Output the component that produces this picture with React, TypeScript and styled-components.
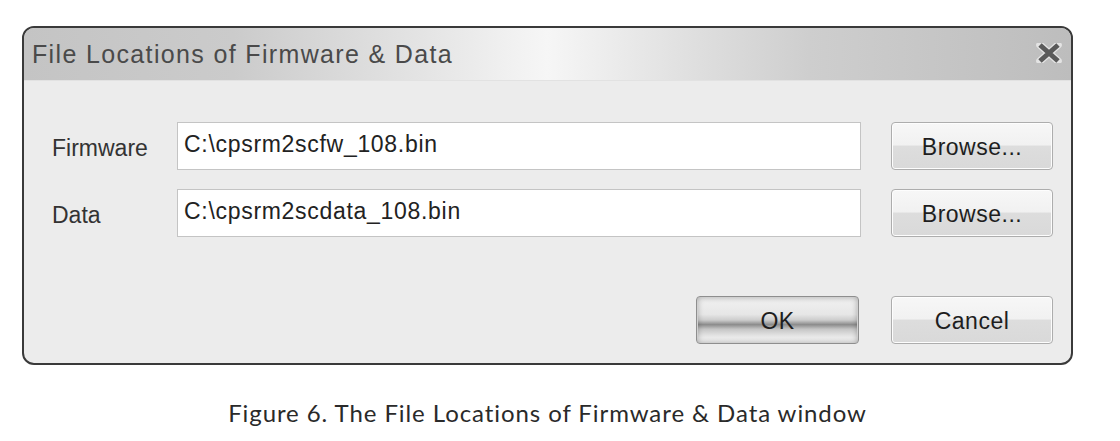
import React, { FC } from 'react';
import styled, { createGlobalStyle } from 'styled-components';

const GlobalStyle = createGlobalStyle`
    html, body {
        margin: 0;
        padding: 0;
        background: #ffffff;
    }
    body {
        font-family: "Liberation Sans", Arial, sans-serif;
    }
`;

const Page = styled.div`
    width: 1120px;
    height: 441px;
    padding: 26px 0 0 22px;
    box-sizing: border-box;
`;

const Dialog = styled.div`
    width: 1051px;
    height: 339px;
    box-sizing: border-box;
    border: 2px solid #3a3a3a;
    border-radius: 12px;
    overflow: hidden;
    background: #ececec;
    display: flex;
    flex-direction: column;
`;

const TitleBar = styled.div`
    height: 53px;
    flex-shrink: 0;
    display: flex;
    align-items: center;
    justify-content: space-between;
    padding: 0 9px 0 8px;
    box-sizing: border-box;
    border-bottom: 1px solid #e2e2e2;
    background: linear-gradient(
        to right,
        #c4c4c4 0%,
        #cbcbcb 20%,
        #e4e4e4 38%,
        #f6f6f6 50%,
        #e2e2e2 62%,
        #cecece 75%,
        #bdbdbd 100%
    );
`;

const Title = styled.span`
    font-size: 25px;
    color: #4a4a4a;
    letter-spacing: 1.35px;
`;

const CloseButton = styled.div`
    width: 26px;
    height: 20px;
    display: flex;
    margin-top: -2px;
`;

const Body = styled.div`
    flex: 1;
    padding: 41px 18px 0 28px;
    display: flex;
    flex-direction: column;
`;

const FieldGrid = styled.div`
    display: grid;
    grid-template-columns: 125px 684px 1fr;
    row-gap: 19px;
    align-items: center;
`;

const Label = styled.label`
    font-size: 23px;
    color: #333333;
    padding-top: 4px;
`;

const PathInput = styled.div`
    height: 48px;
    box-sizing: border-box;
    background: #ffffff;
    border: 1px solid #c4c4c4;
    padding: 0 0 3px 6px;
    display: flex;
    align-items: center;
    font-size: 23px;
    letter-spacing: 0.7px;
    color: #222222;
`;

const Button = styled.div<{ $primary?: boolean; $width: number }>`
    width: ${p => p.$width}px;
    height: 48px;
    box-sizing: border-box;
    justify-self: end;
    border: 1px solid ${p => (p.$primary ? '#8e8e8e' : '#adadad')};
    border-radius: 4px;
    display: flex;
    align-items: center;
    justify-content: center;
    padding-top: 2px;
    font-size: 23px;
    letter-spacing: 0.5px;
    color: #1e1e1e;
    background: ${p =>
        p.$primary
            ? 'linear-gradient(to bottom, #f2f2f2 0%, #e6e6e6 38%, #cdcdcd 50%, #8c8c8c 60%, #c6c6c6 70%, #ececec 88%, #f6f6f6 100%)'
            : 'linear-gradient(to bottom, #f7f7f7 0%, #f1f1f1 48%, #dddddd 50%, #d9d9d9 100%)'};
    box-shadow: ${p =>
        p.$primary
            ? 'inset 0 0 6px rgba(0, 0, 0, 0.35), inset 0 0 0 1px #f4f4f4'
            : 'inset 0 0 0 1px #fdfdfd'};
`;

const Actions = styled.div`
    display: flex;
    justify-content: flex-end;
    gap: 32px;
    margin-top: 59px;
`;

const Caption = styled.div`
    width: 1051px;
    margin-top: 33px;
    text-align: center;
    font-family: Lato, "Noto Sans", sans-serif;
    font-size: 24px;
    color: #2a2a2a;
    letter-spacing: 0.92px;
`;

const CloseIcon: FC = () => (
    <svg width="26" height="20" viewBox="0 0 26 20">
        <path d="M4 2 L22 18 M22 2 L4 18" stroke="#e4e4e4" strokeWidth="7.5" strokeLinecap="round" />
        <path d="M4 2 L22 18 M22 2 L4 18" stroke="#5a5a5a" strokeWidth="5" strokeLinecap="butt" />
    </svg>
);

const fields = [
    { label: 'Firmware', path: 'C:\\cpsrm2scfw_108.bin' },
    { label: 'Data', path: 'C:\\cpsrm2scdata_108.bin' },
];

const App: FC = () => {
    return (
        <>
            <GlobalStyle />
            <Page>
                <Dialog>
                    <TitleBar>
                        <Title>File Locations of Firmware &amp; Data</Title>
                        <CloseButton>
                            <CloseIcon />
                        </CloseButton>
                    </TitleBar>
                    <Body>
                        <FieldGrid>
                            {fields.map(f => (
                                <React.Fragment key={f.label}>
                                    <Label>{f.label}</Label>
                                    <PathInput>{f.path}</PathInput>
                                    <Button $width={162}>Browse...</Button>
                                </React.Fragment>
                            ))}
                        </FieldGrid>
                        <Actions>
                            <Button $primary $width={163}>OK</Button>
                            <Button $width={162}>Cancel</Button>
                        </Actions>
                    </Body>
                </Dialog>
                <Caption>Figure 6. The File Locations of Firmware &amp; Data window</Caption>
            </Page>
        </>
    );
};

export default App;
